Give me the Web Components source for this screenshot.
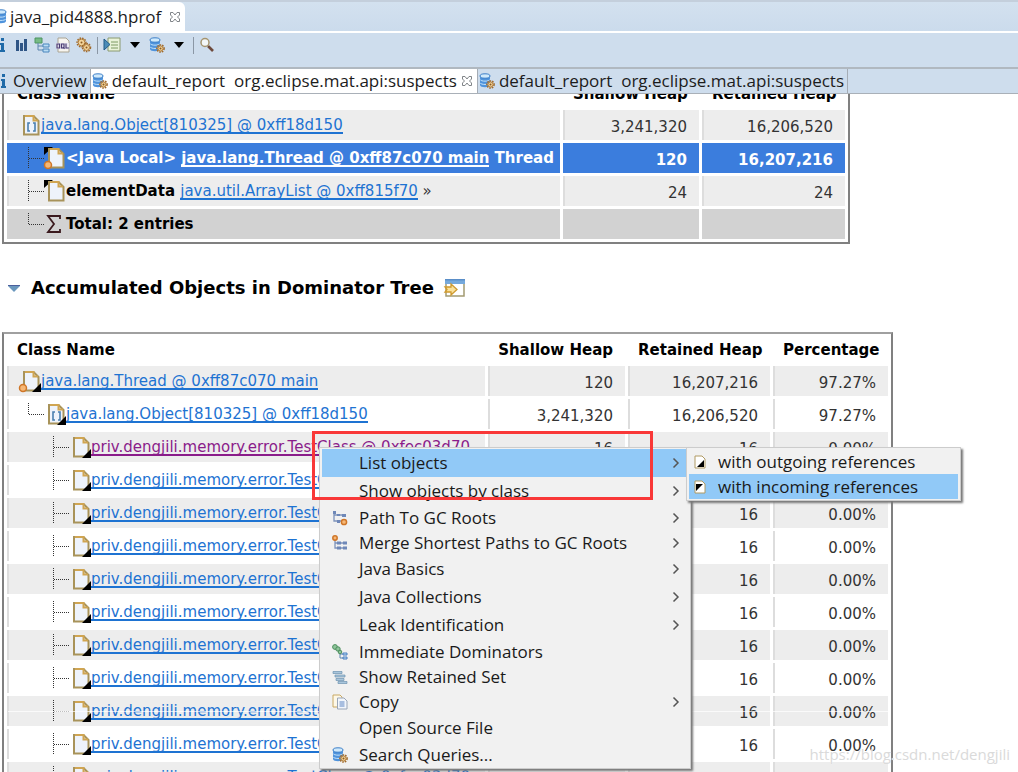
<!DOCTYPE html>
<html lang="en">
<head>
<meta charset="utf-8">
<title>java_pid4888.hprof</title>
<style>
html, body { margin: 0; height: 100%; overflow: hidden; background: #fff; }
</style>
</head>
<body>
<mat-workbench></mat-workbench>

<script>
const doc = (x = 7, y = 2) => `<path d="M${x + 1} ${y + 1}h9.500l5 5v13.500h-14.500z" fill="#eef3fb" stroke="#a8935a" stroke-width="2"/><path d="M${x + 2} ${y + 1}h8.500v4.500h4.500" fill="none" stroke="#d0a552" stroke-width="2"/>`;
const corner = '<path d="M25 14v9h-9z" fill="#000"/>';
const orb = (x, y, r = 3.5) => `<circle cx="${x}" cy="${y}" r="${r}" fill="#f6b877" stroke="#cf7628" stroke-width="1.500"/>`;
const brackets = '<path d="M14 10h-2v8h2M17 10h2v8h-2" fill="none" stroke="#4a7fb0" stroke-width="1.600"/>';
const db = '<path d="M1 3v9c0 3 10 3 10 0V3z" fill="#4f93dc"/><ellipse cx="6" cy="3" rx="5" ry="2.200" fill="#cfe9fb" stroke="#3b7ec8"/><path d="M1 6.500c1 2.200 9 2.200 10 0M1 9.800c1 2.200 9 2.200 10 0" fill="none" stroke="#c4e3fa"/>';
const gear = (x, y, r = 3) => `<circle cx="${x}" cy="${y}" r="${r + 1}" fill="none" stroke="#a06a2c" stroke-width="1.500" stroke-dasharray="1.600 1"/><circle cx="${x}" cy="${y}" r="${r}" fill="#f3d49b" stroke="#b07a35"/><circle cx="${x}" cy="${y}" r="1" fill="#8a5a20"/>`;
const ICONS = {
  doc: ['0 0 25 24', doc() + corner],
  thread: ['0 0 25 24', doc() + corner + orb(7, 19)],
  arrayOut: ['0 0 25 24', doc() + brackets + corner],
  array: ['0 0 25 24', doc() + brackets],
  docIn: ['0 0 25 24', '<path d="M3 1h9l-9 8z" fill="#000"/>' + doc()],
  threadIn: ['0 0 25 24', '<path d="M3 1h9l-9 8z" fill="#000"/>' + doc() + orb(7, 19)],
  sigma: ['0 0 25 24', '<path d="M19 7V4H7l6 8-6 8h12v-3" fill="none" stroke="#3b1a1e" stroke-width="1.800"/>'],
  tee: ['0 0 25 24', '<path d="M12.500 1v22M13 12.500h16" fill="none" stroke="#333" stroke-width="1" stroke-dasharray="1 1"/>'],
  elbow: ['0 0 25 24', '<path d="M12.500 1v12M13 12.500h16" fill="none" stroke="#333" stroke-width="1" stroke-dasharray="1 1"/>'],
  blank: ['0 0 25 24', ''],
  db: ['-5 0 16 16', db],
  dbgear: ['0 0 16 16', db + gear(11.5, 11.5, 2.6)],
  info: ['0 0 16 16', '<path d="M9 1h3v3H9zM8 6h4v7h1v2H8v-2h1V8H8z" fill="#1f6aa8"/>'],
  bars: ['0 0 16 16', '<path d="M3 3h3v11H3zM7 6h3v8H7zM11 2h3v12h-3z" fill="#2f5585"/>'],
  tree: ['0 0 16 16', '<path d="M1 1h7v5H1z" fill="#77bb84" stroke="#4c9460"/><path d="M4 6v7h5M4 9h5" fill="none" stroke="#5c86ad"/><path d="M9 7h6v3H9zM9 12h6v3H9z" fill="#b9dcf4" stroke="#4b86bd"/>'],
  oql: ['0 0 16 16', '<path d="M3 1h8l3 3v11H3z" fill="#f7f5f0" stroke="#aaa493"/><rect x="1" y="6" width="13" height="6" fill="#e9e6f0"/><path d="M2 7h2.500v4H2zM6.500 7H9v4H6.500zM8 10l1.500 2M11 6.500v4.500h3" fill="none" stroke="#4b3d73" stroke-width="1.200"/>'],
  gears: ['0 0 16 16', gear(5.5, 5.5, 3.4) + gear(10.5, 10.5, 3)],
  run: ['0 0 18 16', '<path d="M5 1h12v13H5z" fill="#e9f3d9" stroke="#8a9a70"/><path d="M8 5h7M8 8h7M8 11h7" stroke="#7d9a62"/><path d="M1 2l6 5.500-6 5.500z" fill="#4a8cb8" stroke="#215a86"/>'],
  drop: ['0 0 12 16', '<path d="M1 5h10l-5 6z" fill="#000"/>'],
  search: ['0 0 16 16', '<path d="M9 9l5 5" stroke="#6e4a3c" stroke-width="2.600"/><circle cx="6" cy="5.500" r="4" fill="#f3f7f8" stroke="#a5946f" stroke-width="1.500"/>'],
  close: ['0 0 12 12', '<path d="M1.500 1.500h2.500l2 2.500 2-2.500h2.500v2.500L8.500 6l2 2v2.500H8L6 8l-2 2.500H1.500V8l2-2-2-2z" fill="#fff" stroke="#808488"/>'],
  twisty: ['0 0 14 8', '<path d="M1 1h12v1l-6 6-6-6z" fill="#6a97bd"/><path d="M1 1.500h12" stroke="#4b5f9c"/>'],
  openview: ['0 0 22 20', '<path d="M2 2h18v16H2z" fill="#fff" stroke="#a39a72" stroke-width="1.500"/><path d="M1 1h20v5H1z" fill="#76a9dc"/><path d="M1 1h20v1.500H1z" fill="#5a8ec8"/><path d="M1 9h6V6l6 5.500L7 17v-3H1l2-2.500z" fill="#fbe19a" stroke="#cf9a2e" stroke-width="1.300"/>'],
  chevron: ['0 0 8 12', '<path d="M1.500 1.500L6 6l-4.500 4.500" fill="none" stroke="#555" stroke-width="1.500"/>'],
  path: ['0 0 16 16', '<path d="M2 2v9h8M2 5h10" fill="none" stroke="#7d93bb" stroke-width="1.300"/><path d="M1 1h3v3H1zM5 4h3v2H5zM10 4h4v3h-4zM5 10h3v3H5z" fill="#6f88b8"/>' + orb(12, 12, 2.6)],
  merge: ['0 0 16 16', '<path d="M3 4v9h10M3 8h10" fill="none" stroke="#7d93bb" stroke-width="1.300"/><path d="M5 6.500h4v3H5zM11 6.500h4v3h-4zM5 11.500h4v3H5zM11 11.500h4v3h-4z" fill="#6f88b8"/>' + orb(3, 3, 2.2)],
  immdom: ['0 0 16 16', '<path d="M8 8v6h3M8 10h3" fill="none" stroke="#5c86ad"/><circle cx="3" cy="3" r="2.400" fill="#8fc49a" stroke="#4d8f5e"/><circle cx="6" cy="5" r="2.200" fill="#8fc49a" stroke="#4d8f5e"/><circle cx="8" cy="8" r="1.800" fill="#8fc49a" stroke="#4d8f5e"/><path d="M11 9h4v2h-4zM11 13h4v2h-4z" fill="#b9dcf4" stroke="#4b7fc0"/>'],
  retained: ['0 0 16 16', '<path d="M1 2.500h9v2H1zM3 6h10v2H3zM4 9.500h8v2H4zM6 12.500h9v2H6z" fill="#a9c6dc" stroke="#6f93b0" stroke-width=".7"/>'],
  copy: ['0 0 16 16', '<path d="M1 1h7l2 2v10H1z" fill="#fdf8e8" stroke="#c9a862"/><path d="M5.500 4H12l3 3v8H5.500z" fill="#f2f6fc" stroke="#9aa6b8"/><path d="M7.500 8h5M7.500 10h5M7.500 12h5" stroke="#5f86c4"/>'],
  refOut: ['0 0 12 14', '<path d="M1 1h7l3 3v9H1z" fill="#fff" stroke="#b09a62"/><path d="M10 5v7H3z" fill="#000"/>'],
  refIn: ['0 0 12 14', '<path d="M1 1h7l3 3v9H1z" fill="#fff" stroke="#b09a62"/><path d="M2 4h7l-7 7z" fill="#000"/>']
};

customElements.define('mat-icon', class extends HTMLElement {
  connectedCallback() {
    const [box, art] = ICONS[this.getAttribute('name')];
    const [, , w, h] = box.split(' ');
    this.attachShadow({ mode: 'open' }).innerHTML = `
      <style>:host{display:block;flex:none;width:${w}px;height:${h}px;white-space:normal}svg{display:block;overflow:visible;width:100%;height:100%}</style>
      <svg viewBox="${box}" aria-hidden="true">${art}</svg>`;
  }
});

customElements.define('mat-tab', class extends HTMLElement {
  connectedCallback() {
    const icon = this.getAttribute('icon');
    this.attachShadow({ mode: 'open' }).innerHTML = `
      <style>
        :host{display:flex}
        button{all:unset;box-sizing:border-box;display:flex;align-items:center;gap:4px;padding:0 3px 0 1px;white-space:pre;color:#1c1c1c}
        :host([active]) button{background:#fff}
        :host([kind=report]) button{border-right:1px solid #a5acb5}
        :host([kind=editor]) button{border-radius:0 6px 0 0}
        :host([kind=editor]) .x{margin-left:4px}
        :host([closable]) button{padding-right:4px}
      </style>
      <button type="button" role="tab" aria-selected="${this.hasAttribute('active')}"><mat-icon name="${icon}"></mat-icon><span><slot></slot></span>${this.hasAttribute('closable') ? '<mat-icon class="x" name="close"></mat-icon>' : ''}</button>`;
  }
});

customElements.define('mat-toolbar', class extends HTMLElement {
  connectedCallback() {
    const tools = [['info', 'Overview'], ['bars', 'Histogram'], ['tree', 'Dominator Tree'], ['oql', 'OQL'], ['gears', 'Thread Overview'], null, ['run', 'Run Expert System'], ['drop', 'Reports menu'], ['dbgear', 'Query Browser'], ['drop', 'Queries menu'], null, ['search', 'Find']];
    this.attachShadow({ mode: 'open' }).innerHTML = `
      <style>
        :host{display:flex;align-items:center;box-sizing:border-box;height:34px;padding:0 0 10px;margin-left:-8px;gap:5px}
        button{all:unset;display:block}
        i{width:1px;height:17px;background:#8b97a5}
        button[title$=menu]{margin:0 3px}
      </style>` + tools.map(t => t ? `<button type="button" title="${t[1]}"><mat-icon name="${t[0]}"></mat-icon></button>` : '<i></i>').join('');
  }
});

customElements.define('mat-table', class extends HTMLElement {
  connectedCallback() {
    const { cols, rows } = DATA[this.getAttribute('data')];
    const head = cols.map(c => `<th scope="col">${c[0]}</th>`).join('');
    const body = rows.map(r => `<tr class="${r.kind || ''}"><td><div>${r.icons.map(n => `<mat-icon name="${n}"></mat-icon>`).join('')}${r.html}</div></td>${r.values.map(v => `<td>${v}</td>`).join('')}</tr>`).join('');
    this.attachShadow({ mode: 'open' }).innerHTML = `
      <style>
        :host{display:block}
        table{table-layout:fixed;border-collapse:separate;border-spacing:3px;border:2px solid #808080;border-top-color:#a0a0a0;padding:0;font:15px/18px "DejaVu Sans",Verdana,sans-serif;color:#333}
        th{height:26px;padding:0 12px 0 10px;font-weight:700;color:#000;text-align:right;white-space:nowrap}
        th:first-child{text-align:left}
        td{box-sizing:border-box;height:30px;padding:3px 12px 0 0;border-left:2px solid #ddd;text-align:right;white-space:nowrap}
        td:first-child{padding:0 0 0 7px;text-align:left}
        div{display:flex;align-items:center;height:28px;overflow:hidden}
        tbody tr:nth-child(odd) td{background:#ededed}
        tbody tr.sel td{background:#3b7ddd;border-color:#3b7ddd;color:#fff;font-weight:700}
        tbody tr.total td{background:#d2d2d2;border-color:#d2d2d2}
        b{color:#000;white-space:pre}
        .sel b{color:#fff}
        a{display:block;height:16px;overflow:hidden;border-bottom:2px solid;color:#1e73d2;text-decoration:none}
        a.seen{color:#8a1c8a}
        .sel a{color:#fff}
      </style>
      <table style="width:${cols.reduce((s, c) => s + c[1] + 3, 7)}px"><colgroup>${cols.map(c => `<col style="width:${c[1]}px">`).join('')}</colgroup><thead><tr>${head}</tr></thead><tbody>${body}</tbody></table>`;
  }
});

const link = (t, c = '') => `<a href="#" class="${c}">${t}</a>`;
const leaf = c => ({ icons: ['blank', 'tee', 'doc'], html: link('priv.dengjili.memory.error.TestClass @ 0xfec03d70', c), values: ['16', '16', '0.00%'] });
const DATA = {
  paths: {
    cols: [['Class Name', 553], ['Shallow Heap', 136], ['Retained Heap', 143]],
    rows: [
      { icons: ['array'], html: link('java.lang.Object[810325] @ 0xff18d150'), values: ['3,241,320', '16,206,520'] },
      { kind: 'sel', icons: ['tee', 'threadIn'], html: '<b>&lt;Java Local&gt; </b>' + link('java.lang.Thread @ 0xff87c070 main') + '<b> Thread</b>', values: ['120', '16,207,216'] },
      { icons: ['tee', 'docIn'], html: '<b>elementData </b>' + link('java.util.ArrayList @ 0xff815f70') + '<span>&nbsp;»</span>', values: ['24', '24'] },
      { kind: 'total', icons: ['elbow', 'sigma'], html: '<b>Total: 2 entries</b>', values: ['', ''] }
    ]
  },
  dominators: {
    cols: [['Class Name', 478], ['Shallow Heap', 137], ['Retained Heap', 142], ['Percentage', 115]],
    rows: [
      { icons: ['thread'], html: link('java.lang.Thread @ 0xff87c070 main'), values: ['120', '16,207,216', '97.27%'] },
      { icons: ['elbow', 'arrayOut'], html: link('java.lang.Object[810325] @ 0xff18d150'), values: ['3,241,320', '16,206,520', '97.27%'] },
      leaf('seen'),
      ...Array.from({ length: 10 }, () => leaf())
    ]
  }
};

customElements.define('mat-menu-item', class extends HTMLElement {
  connectedCallback() {
    const icon = this.getAttribute('icon');
    this.attachShadow({ mode: 'open' }).innerHTML = `
      <style>
        :host{display:block}
        button{all:unset;box-sizing:border-box;display:grid;grid-template-columns:var(--icon-col) 1fr auto;align-items:center;width:100%;height:28px;padding:0 8px 0 0;color:#1a1a1a;white-space:nowrap}
        :host([icon]) button{height:25px}
        :host([active]) button{background:#91c9f7}
        .g{padding-left:var(--icon-pad)}
      </style>
      <button type="button" role="menuitem"><span class="g">${icon ? `<mat-icon name="${icon}"></mat-icon>` : ''}</span><span><slot></slot></span>${this.hasAttribute('more') ? '<mat-icon name="chevron"></mat-icon>' : ''}</button>`;
  }
});

customElements.define('mat-menu', class extends HTMLElement {
  connectedCallback() {
    this.attachShadow({ mode: 'open' }).innerHTML = `
      <style>:host{display:block;box-sizing:border-box;padding:1px 2px;background:#f1f1f1;border:1px solid #ccc;box-shadow:2px 2px 2px #777}</style>
      <div role="menu"><slot></slot></div>`;
  }
});

customElements.define('mat-workbench', class extends HTMLElement {
  connectedCallback() {
    this.attachShadow({ mode: 'open' }).innerHTML = `
      <style>
        :host{position:relative;display:flex;flex-direction:column;height:100vh;overflow:hidden;font:17px/24px "Open Sans","Noto Sans",sans-serif;color:#1c1c1c}
        header{background:#cedded}
        .editors,.reports{display:flex;box-sizing:border-box}
        .editors{height:33px;border-top:2px solid #c4cfdc;border-bottom:2px solid #fff;background:linear-gradient(#d3e1ef,#cbdbec)}
        .editors mat-tab{margin-left:-11px}
        .reports{height:27px;border-top:2px solid #b0b8c0;border-bottom:1px solid #a9b0b8}
        .reports mat-tab:first-child{margin-left:-8px}
        main{flex:1;min-height:0;overflow:hidden;padding-left:2px}
        .first{margin-top:-18px}
        h2{display:flex;align-items:center;gap:10px;margin:0;height:88px;padding:0 0 0 5px;font:700 18px/24px "DejaVu Sans",Verdana,sans-serif;color:#000}
        .ctx,.sub,.mark,.seam,.wm{position:absolute}
        .ctx{left:319px;top:447px;width:372px;--icon-col:37px;--icon-pad:10px}
        .sub{left:686px;top:447px;width:275px;--icon-col:29px;--icon-pad:5px}
        .mark{left:312px;top:431px;width:341px;height:69px;box-sizing:border-box;border:3px solid #f93838;pointer-events:none}
        .seam{left:8px;top:711px;width:881px;height:1px;background:#ffffffb0}
        .wm{right:8px;bottom:8px;font-size:15px;line-height:20px;color:#dadada;text-shadow:0 0 1px #fff}
      </style>
      <header>
        <div class="editors" role="tablist"><mat-tab kind="editor" icon="db" active closable>java_pid4888.hprof</mat-tab></div>
        <mat-toolbar role="toolbar"></mat-toolbar>
        <div class="reports" role="tablist">
          <mat-tab kind="report" icon="info">Overview</mat-tab>
          <mat-tab kind="report" icon="dbgear" active closable>default_report  org.eclipse.mat.api:suspects</mat-tab>
          <mat-tab kind="report" icon="dbgear">default_report  org.eclipse.mat.api:suspects</mat-tab>
        </div>
      </header>
      <main>
        <mat-table class="first" data="paths"></mat-table>
        <h2><mat-icon name="twisty"></mat-icon><span>Accumulated Objects in Dominator Tree</span><mat-icon name="openview"></mat-icon></h2>
        <mat-table data="dominators"></mat-table>
      </main>
      <div class="seam"></div>
      <mat-menu class="ctx">
        <mat-menu-item active more>List objects</mat-menu-item>
        <mat-menu-item more>Show objects by class</mat-menu-item>
        <mat-menu-item icon="path" more>Path To GC Roots</mat-menu-item>
        <mat-menu-item icon="merge" more>Merge Shortest Paths to GC Roots</mat-menu-item>
        <mat-menu-item more>Java Basics</mat-menu-item>
        <mat-menu-item more>Java Collections</mat-menu-item>
        <mat-menu-item more>Leak Identification</mat-menu-item>
        <mat-menu-item icon="immdom">Immediate Dominators</mat-menu-item>
        <mat-menu-item icon="retained">Show Retained Set</mat-menu-item>
        <mat-menu-item icon="copy" more>Copy</mat-menu-item>
        <mat-menu-item>Open Source File</mat-menu-item>
        <mat-menu-item icon="dbgear">Search Queries...</mat-menu-item>
      </mat-menu>
      <mat-menu class="sub">
        <mat-menu-item icon="refOut">with outgoing references</mat-menu-item>
        <mat-menu-item icon="refIn" active>with incoming references</mat-menu-item>
      </mat-menu>
      <div class="mark"></div>
      <div class="wm">https://blog.csdn.net/dengjili</div>`;
  }
});
</script>
</body>
</html>
